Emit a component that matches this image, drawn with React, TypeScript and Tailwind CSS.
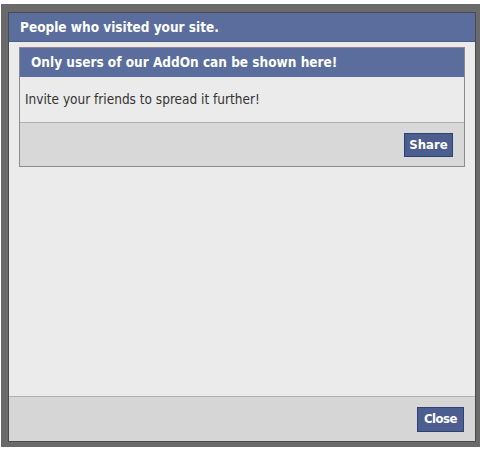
import React from "react";

export default function App() {
  const font = { fontFamily: '"DejaVu Sans Condensed", "DejaVu Sans", sans-serif' };
  return (
    <div className="w-[485px] h-[452px] bg-white pt-[4px] pl-[1px]" style={font}>
      <div className="w-[479px] h-[443px] bg-[#6a6a6a] pt-[8px] pl-[7px] pr-[4px] pb-[5px] flex flex-col">
        <div className="flex-1 flex flex-col border border-[#4a4a4a] bg-[#ebebeb]">
          <div className="h-[29px] bg-[#5a6d9c] border-b border-[#4b5d8a] flex items-center pl-[11px] text-white font-bold text-[13.5px]">
            People who visited your site.
          </div>
          <div className="flex-1 px-[10px] pt-[5px]">
            <div className="border border-[#8c8c8c] flex flex-col">
              <div className="h-[29px] bg-[#5a6d9c] flex items-center pl-[11px] text-white font-bold text-[13.5px]">
                Only users of our AddOn can be shown here!
              </div>
              <div className="h-[46px] bg-[#ebebeb] border-b border-[#b0b0b0] flex items-center pl-[5px] text-[13.5px] text-[#333]">
                Invite your friends to spread it further!
              </div>
              <div className="h-[43px] bg-[#d8d8d8] flex items-center justify-end pr-[11px]">
                <button className="h-[24px] w-[49px] bg-[#4b5e8f] border border-[#2f4172] text-white font-bold text-[13px]">
                  Share
                </button>
              </div>
            </div>
          </div>
          <div className="h-[45px] bg-[#d6d6d6] border-t border-[#b0b0b0] flex items-center justify-end pr-[11px]">
            <button className="h-[25px] w-[47px] bg-[#4b5e8f] border border-[#2f4172] text-white font-bold text-[13px] tracking-[-0.5px]">
              Close
            </button>
          </div>
        </div>
      </div>
    </div>
  );
}
